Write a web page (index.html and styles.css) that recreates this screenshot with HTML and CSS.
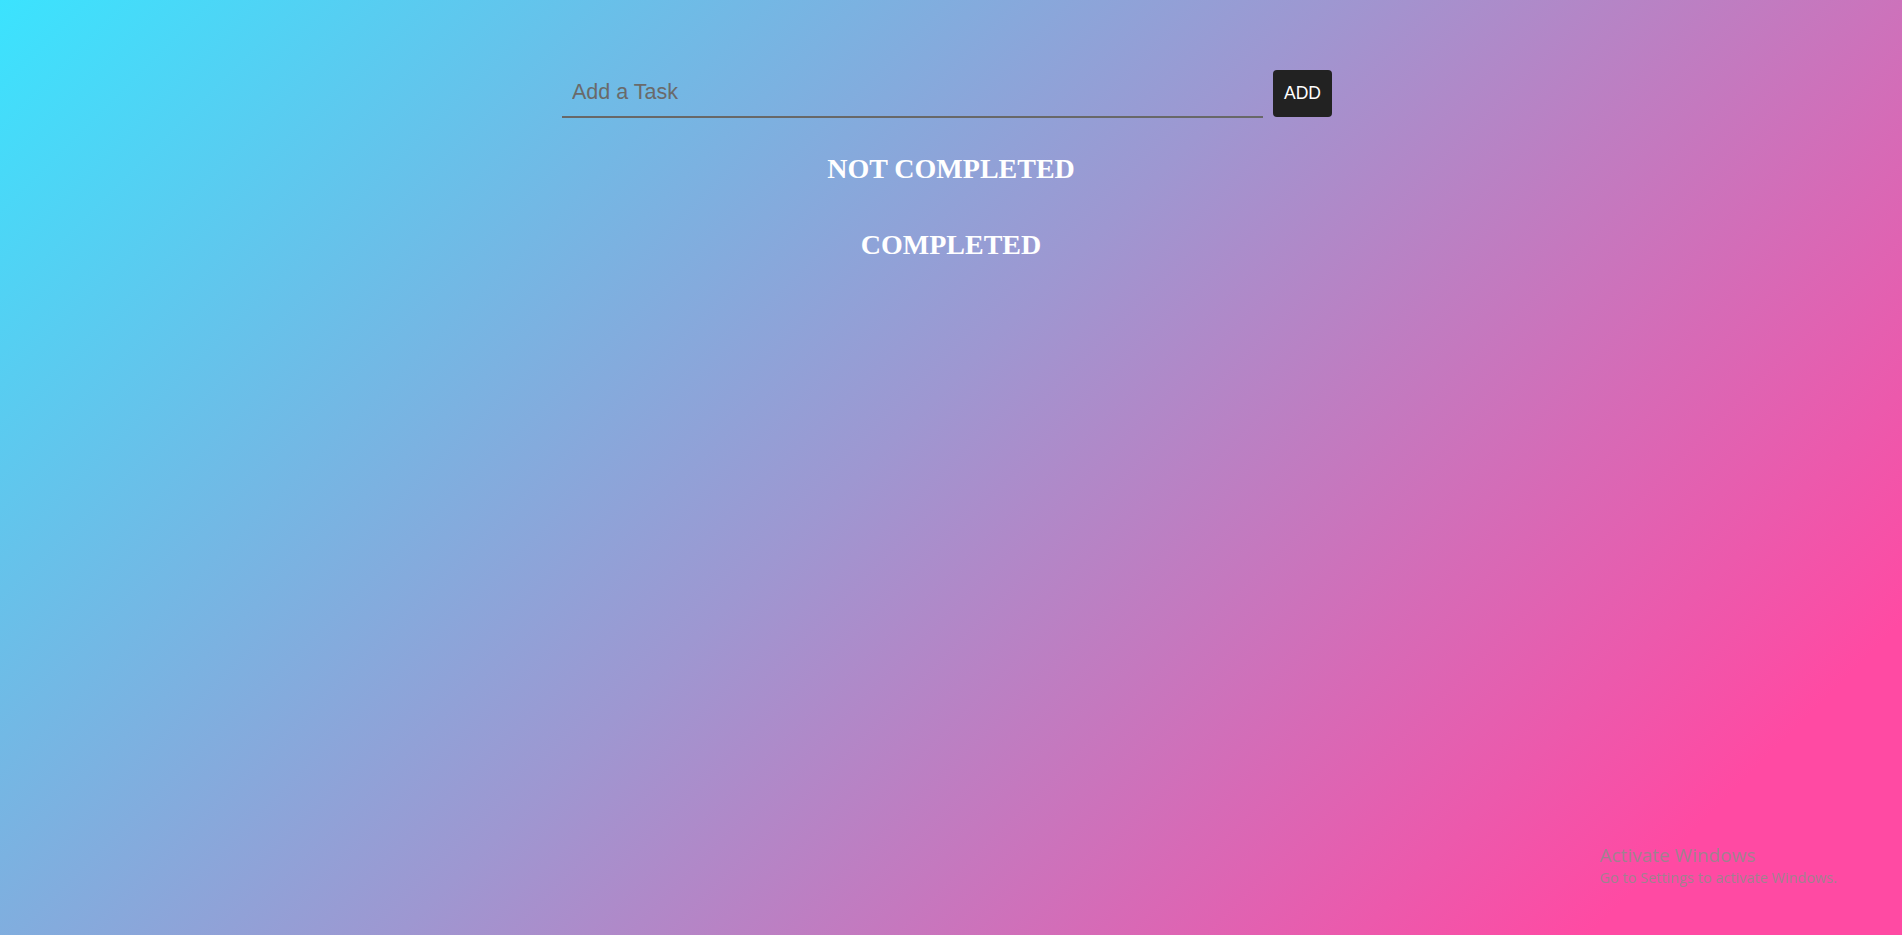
FILE: index.html
```html
<!DOCTYPE html>
<html lang="en">
<head>
<meta charset="utf-8">
<title>Todo</title>
<link rel="stylesheet" href="styles.css">
</head>
<body>
<main class="app">
  <form class="task-form">
    <input class="task-input" type="text" placeholder="Add a Task">
    <button class="add-btn" type="button">ADD</button>
  </form>
  <section class="group">
    <h2 class="group-title">NOT COMPLETED</h2>
    <ul class="task-list"></ul>
  </section>
  <section class="group">
    <h2 class="group-title">COMPLETED</h2>
    <ul class="task-list"></ul>
  </section>
</main>
<div class="watermark">
  <div class="wm-title">Activate Windows</div>
  <div class="wm-sub">Go to Settings to activate Windows.</div>
</div>
</body>
</html>
```

FILE: styles.css
```css
html, body {
  margin: 0;
  padding: 0;
}
body {
  min-height: 100vh;
  background: linear-gradient(135deg, #3be3fe 0%, #9e97d1 47%, #ff4aa3 89%, #ff4aa3 100%);
  font-family: "Liberation Serif", "Times New Roman", serif;
}
.app {
  width: 778px;
  padding-top: 70px;
  margin: 0 auto;
}
.task-form {
  display: flex;
  gap: 10px;
  align-items: flex-start;
  margin: 0 8px 0 0;
}
.task-input {
  flex: 1;
  height: 48px;
  box-sizing: border-box;
  border: none;
  border-bottom: 2px solid #686868;
  background: transparent;
  padding: 0 10px 1px;
  font-family: "Liberation Sans", Arial, sans-serif;
  font-size: 21.5px;
  color: #333;
  outline: none;
}
.task-input::placeholder {
  color: #6a6a6a;
}
.add-btn {
  width: 59px;
  height: 47px;
  border: none;
  border-radius: 4px;
  background: #222222;
  color: #ffffff;
  font-family: "Liberation Sans", Arial, sans-serif;
  font-size: 17.5px;
  padding: 0;
  cursor: pointer;
}
.group-title {
  margin: 0;
  text-align: center;
  color: #ffffff;
  font-size: 28px;
  font-weight: bold;
  line-height: 32px;
}
.group {
  margin-top: 35px;
}
.group + .group {
  margin-top: 44px;
}
.task-list {
  list-style: none;
  margin: 0;
  padding: 0;
}
.watermark {
  position: fixed;
  left: 1600px;
  top: 842px;
  color: rgba(140, 140, 140, 0.85);
  font-family: "Open Sans", "Noto Sans", sans-serif;
  pointer-events: none;
}
.wm-title {
  font-size: 19px;
  line-height: 26px;
}
.wm-sub {
  font-size: 14.5px;
  line-height: 20px;
}
```
